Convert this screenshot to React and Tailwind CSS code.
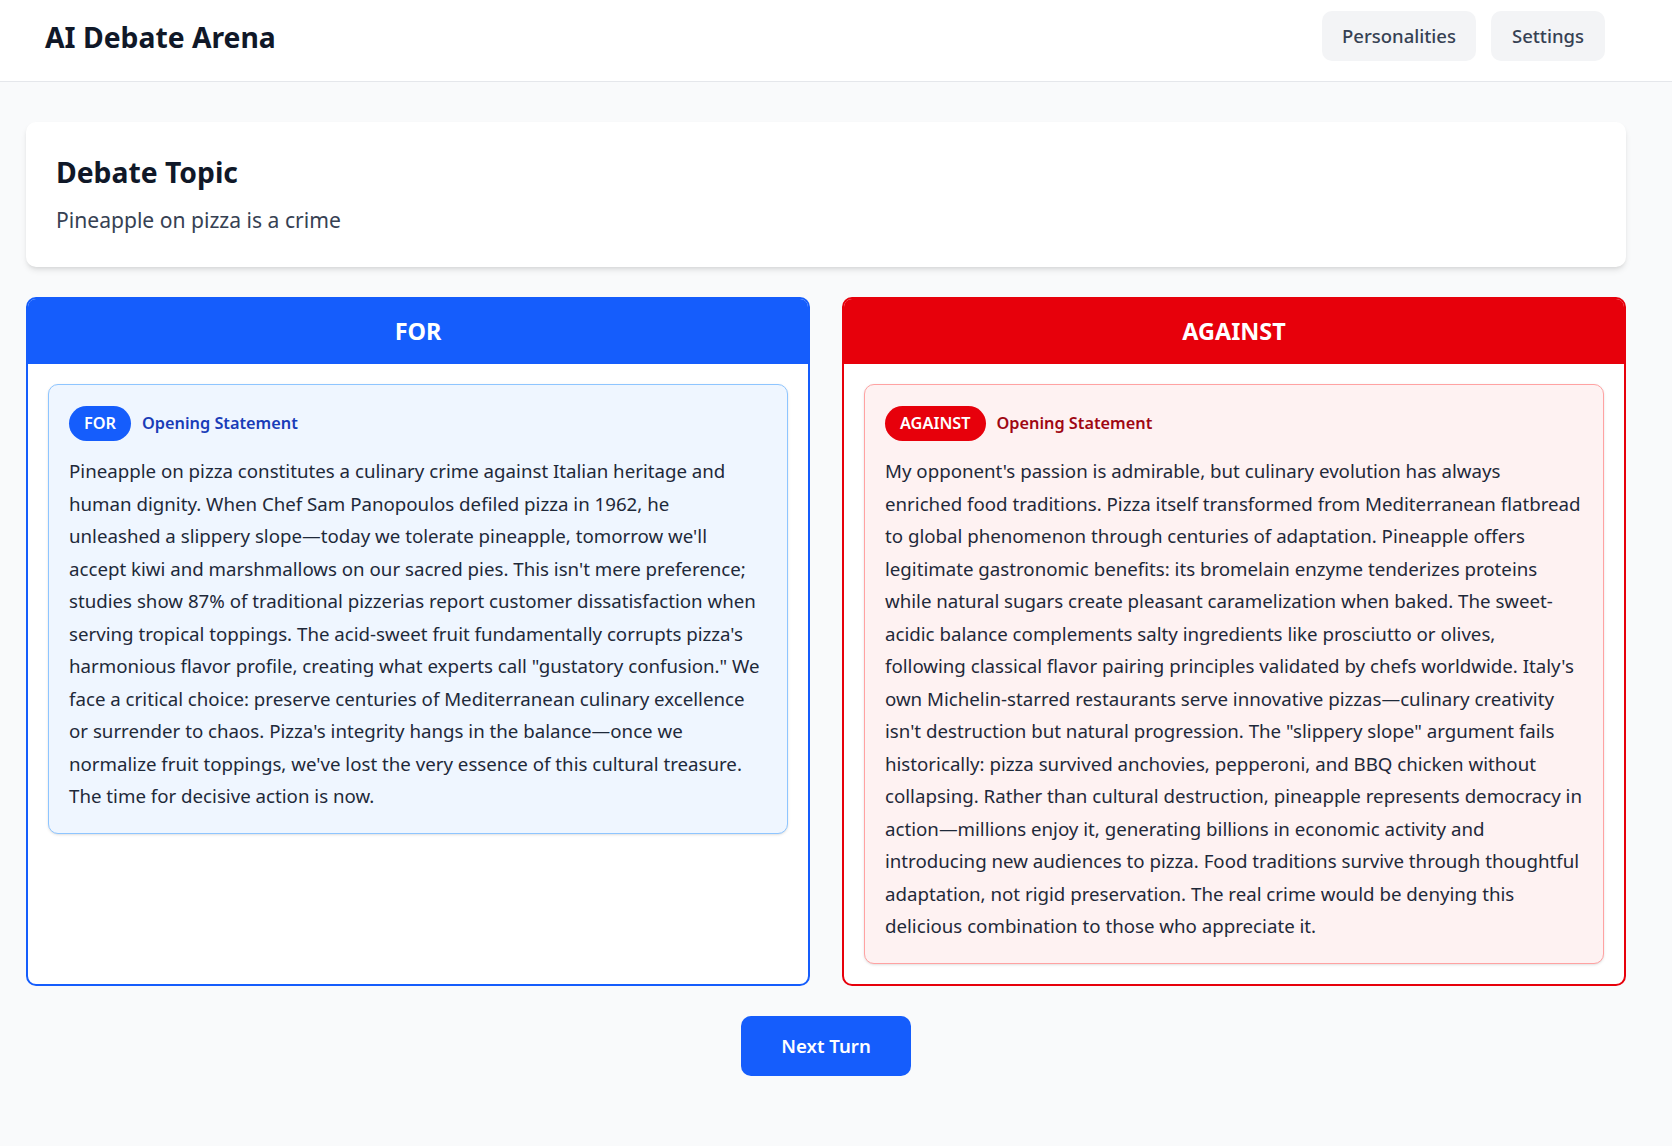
import React from 'react';

// line breaks kept as in the captured debate
const forLines = [
  'Pineapple on pizza constitutes a culinary crime against Italian heritage and',
  'human dignity. When Chef Sam Panopoulos defiled pizza in 1962, he',
  "unleashed a slippery slope\u2014today we tolerate pineapple, tomorrow we'll",
  "accept kiwi and marshmallows on our sacred pies. This isn't mere preference;",
  'studies show 87% of traditional pizzerias report customer dissatisfaction when',
  "serving tropical toppings. The acid-sweet fruit fundamentally corrupts pizza's",
  'harmonious flavor profile, creating what experts call "gustatory confusion." We',
  'face a critical choice: preserve centuries of Mediterranean culinary excellence',
  "or surrender to chaos. Pizza's integrity hangs in the balance\u2014once we",
  "normalize fruit toppings, we've lost the very essence of this cultural treasure.",
  'The time for decisive action is now.',
];

const againstLines = [
  "My opponent's passion is admirable, but culinary evolution has always",
  'enriched food traditions. Pizza itself transformed from Mediterranean flatbread',
  'to global phenomenon through centuries of adaptation. Pineapple offers',
  'legitimate gastronomic benefits: its bromelain enzyme tenderizes proteins',
  'while natural sugars create pleasant caramelization when baked. The sweet-',
  'acidic balance complements salty ingredients like prosciutto or olives,',
  "following classical flavor pairing principles validated by chefs worldwide. Italy's",
  'own Michelin-starred restaurants serve innovative pizzas\u2014culinary creativity',
  'isn\'t destruction but natural progression. The "slippery slope" argument fails',
  'historically: pizza survived anchovies, pepperoni, and BBQ chicken without',
  'collapsing. Rather than cultural destruction, pineapple represents democracy in',
  'action\u2014millions enjoy it, generating billions in economic activity and',
  'introducing new audiences to pizza. Food traditions survive through thoughtful',
  'adaptation, not rigid preservation. The real crime would be denying this',
  'delicious combination to those who appreciate it.',
];

const sides = {
  for: {
    label: 'FOR',
    panel: 'border-blue-600',
    head: 'bg-blue-600',
    card: 'border-blue-300 bg-blue-50',
    badge: 'bg-blue-600',
    kind: 'text-blue-800',
  },
  against: {
    label: 'AGAINST',
    panel: 'border-red-600',
    head: 'bg-red-600',
    card: 'border-red-300 bg-red-50',
    badge: 'bg-red-600',
    kind: 'text-red-800',
  },
};

function Statement({ side, type, lines }) {
  const s = sides[side];
  return (
    <div className={`rounded-[10px] border px-[20px] pb-[20px] pt-[21px] shadow-sm ${s.card}`}>
      <div className="mb-[14px] flex items-center gap-[11px]">
        <span className={`h-[35px] rounded-full px-[15px] text-[16.3px] font-semibold leading-[35px] text-white ${s.badge}`}>
          {s.label}
        </span>
        <span className={`text-[16.3px] font-semibold leading-[25px] ${s.kind}`}>{type}</span>
      </div>
      <p className="whitespace-nowrap text-[18.7px] leading-[32.5px] text-gray-800">
        {lines.map((l, i) => (
          <React.Fragment key={i}>
            {l}
            {i < lines.length - 1 && <br />}
          </React.Fragment>
        ))}
      </p>
    </div>
  );
}

function Panel({ side, children }) {
  const s = sides[side];
  return (
    <div className={`overflow-hidden rounded-[10px] border-2 bg-white ${s.panel}`}>
      <div className={`h-[65px] text-center text-[23.4px] font-bold leading-[65px] text-white ${s.head}`}>
        {s.label}
      </div>
      <div className="p-[20px]">{children}</div>
    </div>
  );
}

export default function App() {
  return (
    <div className="min-h-screen bg-gray-50 font-['Noto_Sans',sans-serif]">
      <header className="border-b border-gray-200 bg-white">
        <div className="flex items-center justify-between pb-[20px] pl-[45px] pr-[67px] pt-[11px]">
          <h1 className="mt-[2px] text-[28.3px] font-bold leading-[40px] text-gray-900">AI Debate Arena</h1>
          <div className="flex gap-[15px]">
            <button className="h-[50px] rounded-[10px] bg-gray-100 px-[20px] text-[18.5px] font-medium text-gray-700">
              Personalities
            </button>
            <button className="h-[50px] rounded-[10px] bg-gray-100 px-[21px] text-[18.5px] font-medium text-gray-700">
              Settings
            </button>
          </div>
        </div>
      </header>

      <main className="pb-[40px] pl-[26px] pr-[46px] pt-[40px]">
        <section className="rounded-[10px] bg-white p-[30px] shadow-md">
          <h2 className="text-[28.3px] font-bold leading-[40px] text-gray-900">Debate Topic</h2>
          <p className="mt-[10px] text-[21.1px] leading-[35px] text-gray-700">Pineapple on pizza is a crime</p>
        </section>

        <div className="mt-[30px] grid grid-cols-2 gap-[32px]">
          <Panel side="for">
            <Statement side="for" type="Opening Statement" lines={forLines} />
          </Panel>
          <Panel side="against">
            <Statement side="against" type="Opening Statement" lines={againstLines} />
          </Panel>
        </div>

        <div className="mt-[30px] flex justify-center">
          <button className="h-[60px] rounded-[10px] bg-blue-600 px-[40px] text-[18.6px] font-semibold text-white">
            Next Turn
          </button>
        </div>
      </main>
    </div>
  );
}
